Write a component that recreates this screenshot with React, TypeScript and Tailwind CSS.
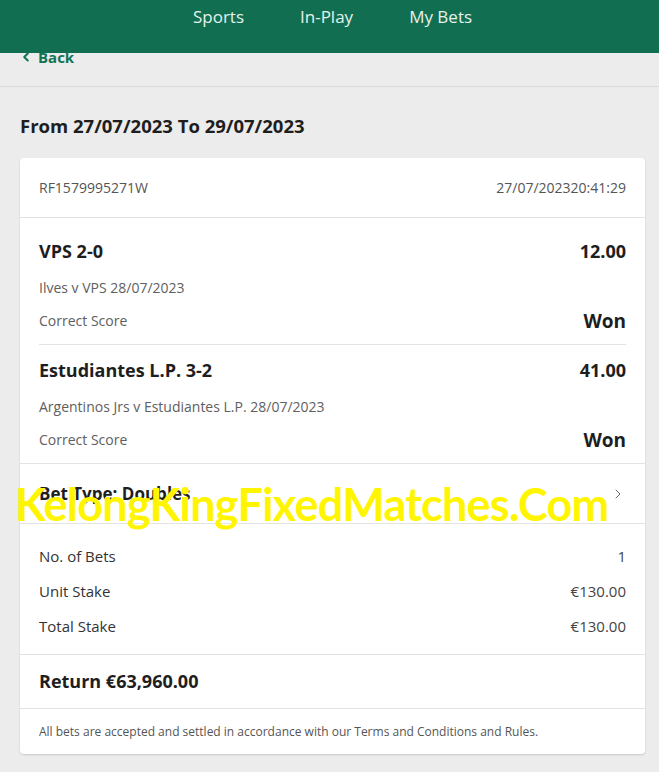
import { ChevronLeft, ChevronRight } from "lucide-react";

const selections = [
  { pick: "VPS 2-0", odds: "12.00", event: "Ilves v VPS 28/07/2023", market: "Correct Score", result: "Won" },
  {
    pick: "Estudiantes L.P. 3-2",
    odds: "41.00",
    event: "Argentinos Jrs v Estudiantes L.P. 28/07/2023",
    market: "Correct Score",
    result: "Won",
  },
];

const totals = [
  ["No. of Bets", "1"],
  ["Unit Stake", "€130.00"],
  ["Total Stake", "€130.00"],
];

export default function App() {
  return (
    <div
      className="relative min-h-screen bg-[#ebeceb] text-[#1e1e1e]"
      style={{ fontFamily: '"Open Sans", "Noto Sans", sans-serif' }}
    >
      <header className="relative z-10 flex h-[53px] justify-center bg-[#126e51] pt-[4px] pl-[6px]">
        <nav className="flex items-start gap-[56px] text-[17px] text-[#e4f2ec]">
          <span>Sports</span>
          <span>In-Play</span>
          <span>My Bets</span>
        </nav>
      </header>

      <div className="-mt-[8px] flex h-[42px] items-start gap-[5px] border-b border-[#d9dad9] px-[19px] pt-[1px] text-[15px] font-bold text-[#0f7557]">
        <ChevronLeft className="mt-[4px] h-[14px] w-[14px]" strokeWidth={3.5} />
        <span className="leading-[22px]">Back</span>
      </div>

      <h1 className="px-[20px] pt-[26px] pb-[19px] text-[18.5px] font-bold leading-[26px]">
        From 27/07/2023 To 29/07/2023
      </h1>

      <div className="ml-[20px] mr-[14px] rounded-[4px] bg-white shadow-[0_1px_2px_rgba(0,0,0,0.15)]">
        <div className="flex h-[60px] items-center justify-between border-b border-[#e3e3e3] px-[19px] text-[14px] text-[#555]">
          <span>RF1579995271W</span>
          <span>
            <span>27/07/2023</span>
            <span>20:41:29</span>
          </span>
        </div>

        <div className="px-[19px] pt-[8px]">
          {selections.map((s, i) => (
            <div
              key={s.pick}
              className={`pt-[12px] pb-[11px] ${i === 0 ? "border-b border-[#e3e3e3]" : ""}`}
            >
              <div className="flex justify-between text-[18px] font-bold leading-[26px]">
                <span>{s.pick}</span>
                <span>{s.odds}</span>
              </div>
              <div className="mt-[14px] text-[14px] leading-[20px] text-[#606060]">{s.event}</div>
              <div className="mt-[11px] flex items-center justify-between leading-[24px]">
                <span className="text-[14px] text-[#606060]">{s.market}</span>
                <span className="text-[19px] font-bold">{s.result}</span>
              </div>
            </div>
          ))}
        </div>

        <div className="flex h-[61px] items-center justify-between border-y border-[#e3e3e3] px-[19px]">
          <span className="text-[17px] font-bold">Bet Type: Doubles</span>
          <ChevronRight className="h-[16px] w-[16px] text-[#666]" strokeWidth={1.5} />
        </div>

        <div className="flex flex-col gap-[11px] px-[19px] pt-[20px] pb-[16px] text-[15px] leading-[24px]">
          {totals.map(([label, value]) => (
            <div key={label} className="flex justify-between">
              <span className="text-[#333]">{label}</span>
              <span className="text-[#444]">{value}</span>
            </div>
          ))}
        </div>

        <div className="flex h-[55px] items-center border-y border-[#e3e3e3] px-[19px] text-[18px] font-bold">
          Return €63,960.00
        </div>

        <div className="flex h-[45px] items-center px-[19px] text-[12px] text-[#555]">
          All bets are accepted and settled in accordance with our Terms and Conditions and Rules.
        </div>
      </div>

      <div className="h-[18px]" />

      <div
        className="pointer-events-none absolute left-[15px] top-[474px] z-20 text-[45px] font-bold leading-[60px] tracking-[-0.75px] text-[#fff500]"
        style={{ fontFamily: 'Lato, "Open Sans", sans-serif' }}
      >
        KelongKingFixedMatches.Com
      </div>
    </div>
  );
}
